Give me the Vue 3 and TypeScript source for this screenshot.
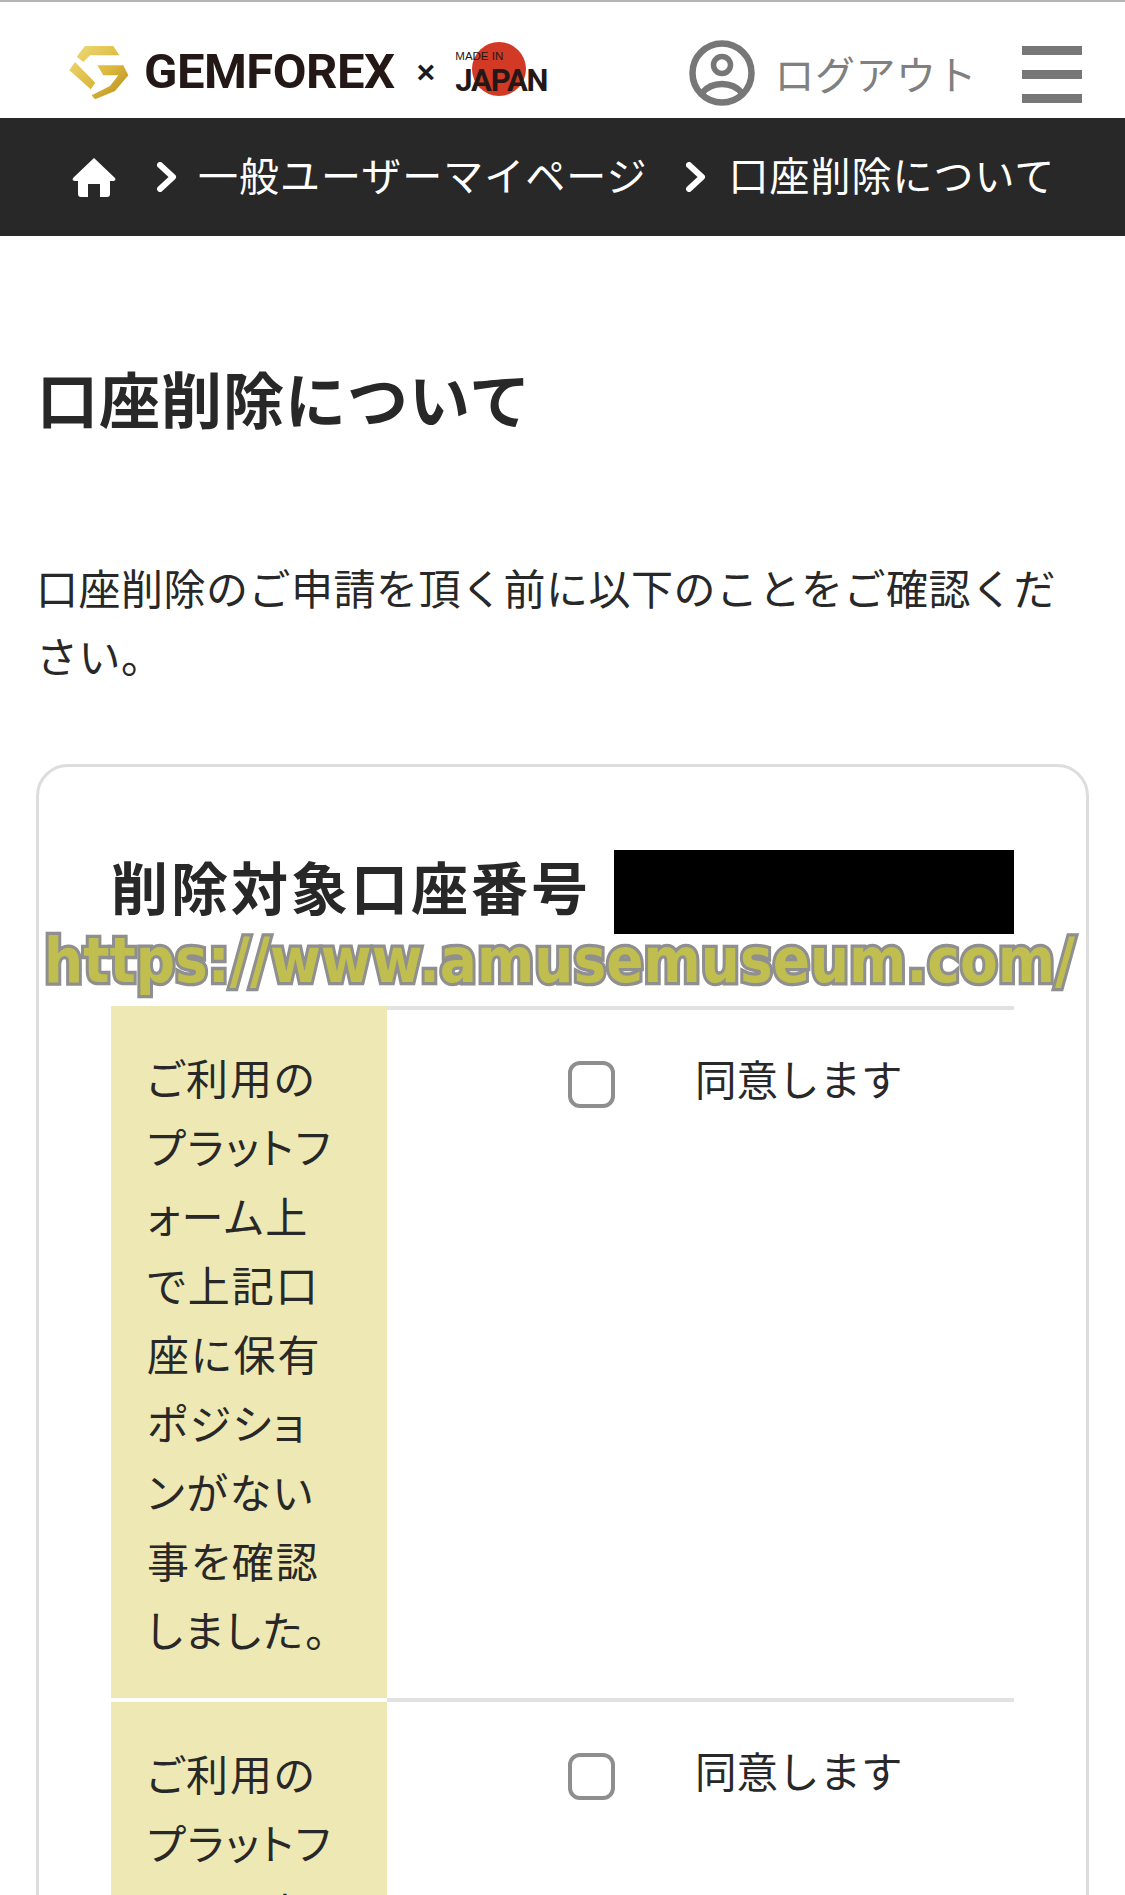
<script setup lang="ts">
const checkRows: string[][] = [
  ['ご利用の', 'プラットフ', 'ォーム上', 'で上記口', '座に保有', 'ポジショ', 'ンがない', '事を確認', 'しました。'],
  ['ご利用の', 'プラットフ', 'ォーム上', 'で上記口'],
]
</script>

<template>
  <div class="page">
    <header class="top">
      <div class="logo">
        <svg class="gem" viewBox="27 27 180 168" width="60" height="56">
          <defs>
            <linearGradient id="gold" x1="0" y1="0" x2="1" y2="1">
              <stop offset="0" stop-color="#f0dc7c" />
              <stop offset="0.55" stop-color="#dcb93f" />
              <stop offset="1" stop-color="#b58a16" />
            </linearGradient>
          </defs>
          <path fill="url(#gold)" d="M75 30H160L178 58H90L70 78 50 62ZM28 103 45 78 106 140 92 160ZM112 88H190L205 118 165 165 105 190 95 178 150 150 175 118H130Z" />
        </svg>
        <span class="brand">GEMFOREX</span>
        <span class="times">×</span>
        <div class="japan">
          <i class="sun"></i>
          <span class="made">MADE IN</span>
          <span class="jp">JAPAN</span>
        </div>
      </div>
      <div class="top-right">
        <svg class="user" viewBox="0 0 66 66" width="66" height="66" fill="none" stroke="#777" stroke-width="6.5">
          <circle cx="33" cy="33" r="29.5" />
          <circle cx="33" cy="25" r="8.5" stroke-width="5.5" />
          <path d="M13 53C18 47 25 44 33 44S48 47 53 53" />
        </svg>
        <span class="logout">ログアウト</span>
        <div class="burger"><i></i><i></i><i></i></div>
      </div>
    </header>

    <nav class="crumbs">
      <svg class="home" viewBox="0 0 44 40" width="44" height="40">
        <path fill="#fff" d="M22 1 43 21C44 23 43 24 41 24H38V37C38 39 37 40 35 40H28V27H16V40H9C7 40 6 39 6 37V24H3C1 24 0 23 1 21Z" />
      </svg>
      <svg class="chev" viewBox="0 0 20 30" width="20" height="30"><path d="M3 3 16 15 3 27" /></svg>
      <span class="crumb-a">一般ユーザーマイページ</span>
      <svg class="chev chev2" viewBox="0 0 20 30" width="20" height="30"><path d="M3 3 16 15 3 27" /></svg>
      <span class="crumb-b">口座削除について</span>
    </nav>

    <main class="body">
      <h1>口座削除について</h1>
      <p class="lead">口座削除のご申請を頂く前に以下のことをご確認ください。</p>

      <section class="card">
        <div class="card-head">
          <h2>削除対象口座番号</h2>
          <div class="redact"></div>
        </div>
        <div class="mark">https://www.amusemuseum.com/</div>
        <div class="table">
          <div v-for="(lines, i) in checkRows" :key="i" class="row">
            <div class="th">
              <span v-for="line in lines" :key="line">{{ line }}</span>
            </div>
            <div class="td">
              <i class="box"></i>
              <span class="agree">同意します</span>
            </div>
          </div>
        </div>
      </section>
    </main>
  </div>
</template>

<style>
html, body {
  background: #fff;
}
</style>

<style scoped>
.page {
  width: 1125px;
  height: 1895px;
  overflow: hidden;
  font-family: "Noto Sans CJK JP", "Noto Sans", sans-serif;
  color: #282828;
  background: #fff;
}
.top {
  height: 118px;
  box-sizing: border-box;
  border-top: 2px solid #b4b4b4;
  display: flex;
  align-items: center;
  justify-content: space-between;
  padding: 26px 43px 0 69px;
}
.logo {
  display: flex;
  align-items: center;
}
.gem {
  margin-right: 15px;
}
.brand {
  font-family: Roboto, "Liberation Sans", sans-serif;
  font-weight: 700;
  font-size: 49px;
  line-height: 50px;
  color: #231815;
  letter-spacing: -0.5px;
  margin-top: -3px;
}
.times {
  margin-left: 22px;
  font-family: "Liberation Sans", sans-serif;
  font-weight: 700;
  font-size: 32px;
  color: #231815;
  margin-top: -2px;
}
.japan {
  position: relative;
  margin: -8px 0 0 20px;
  width: 92px;
  height: 56px;
  color: #231815;
}
.sun {
  position: absolute;
  left: 17px;
  top: 1px;
  width: 54px;
  height: 54px;
  border-radius: 50%;
  background: #d23a26;
}
.made {
  position: absolute;
  left: 0;
  top: 9px;
  font-family: "Liberation Sans", sans-serif;
  font-size: 11.5px;
  line-height: 12px;
  white-space: nowrap;
}
.jp {
  position: absolute;
  left: 0;
  top: 23px;
  font-family: Roboto, sans-serif;
  font-weight: 700;
  font-size: 31px;
  line-height: 34px;
  letter-spacing: -1.2px;
}
.top-right {
  display: flex;
  align-items: center;
}
.logout {
  margin-left: 20px;
  font-size: 40px;
  letter-spacing: 0.5px;
  color: #808080;
}
.burger {
  margin: 3px 0 0 45px;
  width: 60px;
  display: flex;
  flex-direction: column;
  gap: 15px;
}
.burger i {
  display: block;
  height: 9px;
  background: #777;
}
.crumbs {
  height: 118px;
  background: #282828;
  display: flex;
  align-items: center;
  padding-left: 72px;
  color: #fff;
  font-size: 40px;
  letter-spacing: 1px;
}
.home {
  margin-right: 41px;
}
.chev {
  fill: none;
  stroke: #fff;
  stroke-width: 6;
  stroke-linecap: round;
  stroke-linejoin: round;
}
.crumb-a {
  margin: -7px 0 0 21px;
}
.chev2 {
  margin-left: 39px;
}
.crumb-b {
  margin: -7px 0 0 22px;
}
.body {
  padding: 0 36px;
}
h1 {
  margin: 0;
  padding: 120px 0 0 1px;
  font-size: 61px;
  line-height: 84px;
  letter-spacing: 1px;
  font-weight: 700;
}
.lead {
  margin: 113px 0 0;
  font-size: 42px;
  line-height: 68px;
  letter-spacing: 0.5px;
  width: 1030px;
}
.card {
  position: relative;
  margin-top: 75px;
  box-sizing: border-box;
  width: 1053px;
  height: 1200px;
  border: 3px solid #ddd;
  border-radius: 32px;
  padding: 83px 72px 0;
}
.card-head {
  display: flex;
  align-items: center;
  height: 84px;
}
h2 {
  margin: 0;
  padding-bottom: 13px;
  font-size: 57px;
  line-height: 77px;
  letter-spacing: 3px;
  font-weight: 700;
  width: 503px;
}
.redact {
  width: 400px;
  height: 84px;
  background: #000;
}
.mark {
  position: absolute;
  left: 5px;
  top: 159px;
  font-family: "DejaVu Sans", sans-serif;
  font-weight: 700;
  font-size: 55px;
  line-height: 70px;
  white-space: nowrap;
  color: #bfbe4f;
  -webkit-text-stroke: 6px #8f8f8f;
  paint-order: stroke fill;
  transform: scaleY(1.12);
}
.table {
  margin-top: 72px;
  width: 903px;
}
.row {
  display: flex;
}
.th {
  width: 276px;
  box-sizing: border-box;
  background: #ede8b4;
  padding: 36px 0 35px 36px;
  font-size: 42px;
  line-height: 69px;
  letter-spacing: 2px;
  font-feature-settings: "palt";
}
.row + .row .th {
  margin-top: 4px;
}
.th span {
  display: block;
  white-space: nowrap;
}
.td {
  flex: 1;
  display: flex;
  align-items: flex-start;
  border-top: 4px solid #e2e2e2;
  padding: 39px 0 0 181px;
  font-size: 41.5px;
  line-height: 58px;
}
.box {
  display: block;
  margin-top: 12px;
  box-sizing: border-box;
  width: 47px;
  height: 47px;
  border: 4px solid #8e8e8e;
  border-radius: 12px;
}
.agree {
  margin-left: 80px;
}
</style>
